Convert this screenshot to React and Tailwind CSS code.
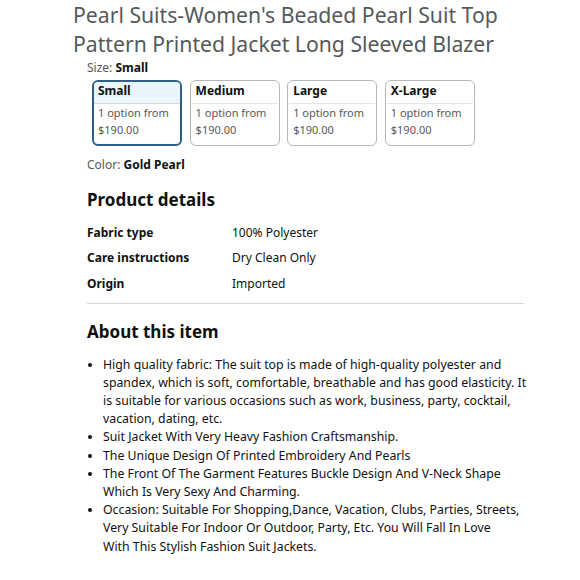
import React from "react";

const sizes = ["Small", "Medium", "Large", "X-Large"];
const details = [
  ["Fabric type", "100% Polyester"],
  ["Care instructions", "Dry Clean Only"],
  ["Origin", "Imported"],
];
const bullets = [
  "High quality fabric: The suit top is made of high-quality polyester and spandex, which is soft, comfortable, breathable and has good elasticity. It is suitable for various occasions such as work, business, party, cocktail, vacation, dating, etc.",
  "Suit Jacket With Very Heavy Fashion Craftsmanship.",
  "The Unique Design Of Printed Embroidery And Pearls",
  "The Front Of The Garment Features Buckle Design And V-Neck Shape Which Is Very Sexy And Charming.",
  <>
    Occasion: Suitable For Shopping,Dance, Vacation, Clubs, Parties, Streets, Very Suitable For Indoor Or Outdoor, Party, Etc. You Will Fall In Love
    <br />
    With This Stylish Fashion Suit Jackets.
  </>,
];

export default function App() {
  return (
    <div className="w-[580px] h-[580px] bg-white overflow-hidden text-[#0f1111]" style={{ fontFamily: '"Noto Sans", "Open Sans", sans-serif' }}>
      <h1 className="pl-[73px] w-[515px] text-[21.2px] leading-[29px] text-[#565959] font-normal">
        Pearl Suits-Women's Beaded Pearl Suit Top Pattern Printed Jacket Long Sleeved Blazer
      </h1>
      <div className="pl-[87px] pr-[56px]">
        <div className="text-[12px] leading-[16px] mt-[2px] text-[#565959]">
          Size: <span className="font-bold text-[#0f1111]">Small</span>
        </div>
        <div className="flex gap-[7.6px] mt-[4px] pl-[5px]">
          {sizes.map((s, i) => (
            <div
              key={s}
              className={
                i === 0
                  ? "w-[90px] h-[66px] rounded-[6px] border-2 border-[#2e5f86] overflow-hidden"
                  : "w-[90px] h-[66px] rounded-[6px] border border-[#b5b8b8] overflow-hidden p-[1px]"
              }
            >
              <div className={i === 0 ? "bg-[#eaf6fc] h-[22px] border-b border-[#d5d9d9] px-[4px] text-[12px] leading-[18px] font-bold" : "h-[22px] border-b border-[#e3e6e6] px-[4px] text-[12px] leading-[18px] font-bold"}>
                {s}
              </div>
              <div className="px-[4px] text-[11px] leading-[17px] text-[#565959]">
                <div>1 option from</div>
                <div>$190.00</div>
              </div>
            </div>
          ))}
        </div>
        <div className="text-[12px] leading-[16px] mt-[11px] text-[#565959]">
          Color: <span className="font-bold text-[#0f1111]">Gold Pearl</span>
        </div>

        <h2 className="text-[17px] leading-[24px] font-bold mt-[15px]">Product details</h2>
        <div className="mt-[8px] text-[12px]">
          {details.map(([k, v]) => (
            <div key={k} className="flex h-[25.5px] items-center">
              <div className="w-[145px] font-bold">{k}</div>
              <div>{v}</div>
            </div>
          ))}
        </div>
        <div className="h-[1px] bg-[#d5d9d9] mt-[6px] w-[437px]" />

        <h2 className="text-[17px] leading-[24px] font-bold mt-[16px]">About this item</h2>
        <ul className="mt-[12px] text-[12.3px] leading-[18.2px] list-disc pl-[16px] w-[442px]">
          {bullets.map((b, i) => (
            <li key={i}>{b}</li>
          ))}
        </ul>
      </div>
    </div>
  );
}
